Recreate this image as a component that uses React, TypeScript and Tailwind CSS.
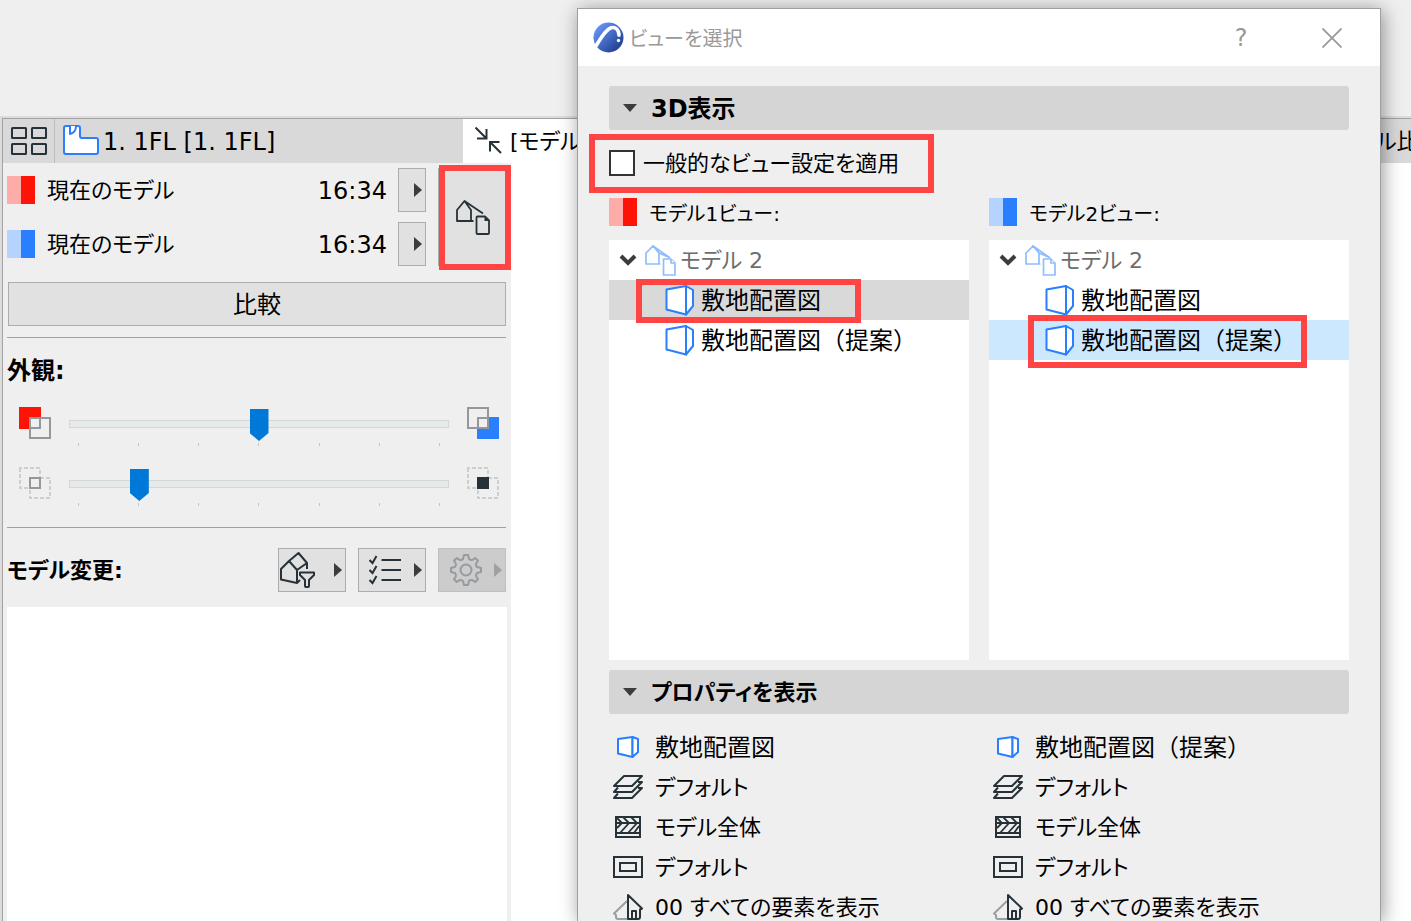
import { useState, type ReactNode } from "react"

type IconProps = { className?: string }

function GridIcon() {
  return (
    <svg width="36" height="28" viewBox="0 0 36 28" fill="none" stroke="#263238" strokeWidth="2" aria-hidden="true">
      <rect x="1" y="1" width="14" height="10" rx="0.500" />
      <rect x="21" y="1" width="14" height="10" rx="0.500" />
      <rect x="1" y="17" width="14" height="10" rx="0.500" />
      <rect x="21" y="17" width="14" height="10" rx="0.500" />
    </svg>
  )
}

function FloorPlanIcon() {
  return (
    <svg width="36" height="30" viewBox="0 0 36 30" fill="#fff" stroke="#2a7fff" strokeWidth="2" strokeLinejoin="round" className="-mt-0.5" aria-hidden="true">
      <path d="M3 1h12a2 2 0 0 1 2 2v8a2 2 0 0 0 2 2h14a2 2 0 0 1 2 2v12a2 2 0 0 1-2 2H3a2 2 0 0 1-2-2V3a2 2 0 0 1 2-2z" />
      <path d="M7 1v8c4-1 6-4 6-8" />
    </svg>
  )
}

function CollapseIcon() {
  return (
    <svg width="27" height="27" viewBox="0 0 27 27" fill="none" stroke="#263238" strokeWidth="2" className="-mt-0.5" aria-hidden="true">
      <path d="M0.500 0.500L11 11M11.500 2v9.500H2M26 26L15.500 15.500M15 24.500V15h9.500" />
    </svg>
  )
}

function ModelIcon({ className }: IconProps) {
  return (
    <svg width="34" height="35" viewBox="0 0 34 35" fill="none" stroke="currentColor" strokeWidth="1.800" strokeLinejoin="round" className={className} aria-hidden="true">
      <path d="M17.500 21H1V10l7.500-9L15 10v11M8.500 1L27 13.500" />
      <path d="M20.500 17.500q0-1 1-1H29l4 4V33q0 1-1 1H21.500q-1 0-1-1z" />
      <path d="M28.500 16.500l4.500 4.500h-4.500z" fill="currentColor" stroke="none" />
    </svg>
  )
}

function ModelTreeIcon() {
  return (
    <svg width="31" height="31" viewBox="0 0 31 31" fill="#fff" stroke="#8fbdff" strokeWidth="1.700" strokeLinejoin="round" aria-hidden="true">
      <path d="M8 1l16.500 11.500L14 8z" />
      <path d="M15.500 19H1V8l7-7 6 7v11" />
      <path d="M18.500 14H26l4 4v12H18.500z" />
      <path d="M26 14v4h4" />
    </svg>
  )
}

function ViewIcon() {
  return (
    <svg width="30" height="31" viewBox="0 0 30 31" fill="#fff" stroke="#2a7fff" strokeWidth="2" strokeLinejoin="round" aria-hidden="true">
      <path d="M1.500 4.500L21 1v28.500L1.500 24.500z" />
      <path d="M21 1l7 4v16L21 29.500z" />
    </svg>
  )
}

function SmallViewIcon() {
  return (
    <svg width="22" height="22" viewBox="0 0 22 22" fill="#fff" stroke="#2a7fff" strokeWidth="2" strokeLinejoin="round" aria-hidden="true">
      <path d="M1 3l14.500-2v20L1 17.500z" />
      <path d="M15.500 1L21 3v13l-5.500 5z" />
    </svg>
  )
}

function FilterHouseIcon() {
  return (
    <svg width="36" height="36" viewBox="0 0 36 36" fill="none" stroke="#263238" strokeWidth="2" strokeLinejoin="round" aria-hidden="true">
      <path d="M1 17l8-8 8 9v13L1 27.500zM9 9l9.500-8L27 11l-10 7M27 11v6M17 31l3-3" />
      <path d="M20 20.500h14v2.500l-5 5v6q0 1-1 1h-2q-1 0-1-1v-6l-5-5z" />
    </svg>
  )
}

function ChecklistIcon() {
  return (
    <svg width="33" height="30" viewBox="0 0 33 30" fill="none" stroke="#263238" strokeWidth="2" aria-hidden="true">
      <path d="M0.500 5l3 3L7.500 1M0.500 15l3 3 4-7M0.500 25l3 3 4-7M12.500 5H32M12.500 15H32M12.500 25H32" />
    </svg>
  )
}

function GearIcon() {
  return (
    <svg width="32" height="32" viewBox="0 0 32 32" fill="none" stroke="#959b9f" strokeWidth="2" strokeLinejoin="round" aria-hidden="true">
      <path d="M14 1h4l1 4q2 1.500 3.500 0.800L25.200 4 28 6.800l-1.800 2.700Q25.500 11.500 27 13l4 1v4l-4 1q-1.500 2-0.800 3.500L28 25.200 25.200 28l-2.700-1.800Q20.500 25.500 19 27l-1 4h-4l-1-4q-2-1.500-3.500-0.800L6.800 28 4 25.200l1.800-2.700Q6.500 20.500 5 19l-4-1v-4l4-1q1.500-2 0.800-3.500L4 6.800 6.800 4l2.700 1.800Q11.500 6.500 13 5z" />
      <circle cx="16" cy="16" r="5.500" />
    </svg>
  )
}

function OldOverlapIcon() {
  return (
    <svg width="32" height="32" viewBox="0 0 32 32" aria-hidden="true">
      <path d="M0 0h22v22H0z" fill="#fd1406" />
      <path d="M10 10h12v12H10z" fill="#efefef" />
      <path d="M11 11h20v20H11zM21 11v10H11" fill="none" stroke="#92989c" strokeWidth="2" />
    </svg>
  )
}

function NewOverlapIcon() {
  return (
    <svg width="32" height="32" viewBox="0 0 32 32" aria-hidden="true">
      <path d="M10 10h22v22H10z" fill="#2a7fff" />
      <path d="M10 10h12v12H10z" fill="#efefef" />
      <path d="M1 1h20v20H1zM11 21V11h10" fill="none" stroke="#92989c" strokeWidth="2" />
    </svg>
  )
}

function CommonIcon({ solid }: { solid?: boolean }) {
  return (
    <svg width="32" height="32" viewBox="0 0 32 32" fill="none" strokeWidth="2" aria-hidden="true">
      <path d="M1 1h20v20H1zM11 11h20v20H11z" stroke="#cccecf" strokeDasharray="4 2" strokeDashoffset="2" />
      {solid ? (
        <path d="M10 10h12v12H10z" fill="#263238" />
      ) : (
        <path d="M11 11h10v10H11z" fill="#efefef" stroke="#92989c" />
      )}
    </svg>
  )
}

function LayersIcon() {
  return (
    <svg width="30" height="24" viewBox="0 0 30 24" fill="none" stroke="#263238" strokeWidth="2" strokeLinejoin="round" aria-hidden="true">
      <path d="M1 11L11 1h18L19 11zM5 12.500L1 17h18L29 7h-4M5 18.500L1 23h18l10-10h-4" />
    </svg>
  )
}

function HatchIcon() {
  return (
    <svg width="26" height="22" viewBox="0 0 26 22" fill="none" stroke="#263238" strokeWidth="2" aria-hidden="true">
      <path d="M1 1h24v20H1zM1 17h24M1 7h24" />
      <path d="M2 2l5 5-5 5M8 1l6 6-9 10M16 1l6 6-9 10M24 10l-5 7" strokeWidth="1.800" />
    </svg>
  )
}

function FrameIcon() {
  return (
    <svg width="30" height="22" viewBox="0 0 30 22" fill="none" stroke="#263238" strokeWidth="2" aria-hidden="true">
      <path d="M1 1h28v20H1zM7 7h16v8H7z" />
    </svg>
  )
}

function RenovationIcon() {
  return (
    <svg width="30" height="26" viewBox="0 0 30 26" fill="none" strokeWidth="2" strokeLinejoin="round" aria-hidden="true">
      <path d="M14 7L1 19.500l2 1.500v2q0 2 2 2h9" stroke="#9a9fa2" />
      <path d="M15 25V1l14 13.500-2 1V23q0 2-2 2zM19 25v-8h4v8" stroke="#263238" />
    </svg>
  )
}

function Logo() {
  return (
    <svg width="32" height="32" viewBox="0 0 32 32" aria-hidden="true">
      <defs>
        <linearGradient id="ball" x1="0" y1="0" x2="1" y2="1">
          <stop offset="0.100" stopColor="#6a97fb" />
          <stop offset="0.900" stopColor="#1d3c8c" />
        </linearGradient>
      </defs>
      <circle cx="15.500" cy="15.500" r="15" fill="url(#ball)" />
      <path d="M1.500 26C6 20 11 8.500 18 5.800c4.500-1.200 8 2 8 7.500" fill="none" stroke="#fff" strokeWidth="3.600" strokeLinecap="round" />
      <circle cx="25.500" cy="18.500" r="1.700" fill="#fff" />
    </svg>
  )
}

function RightArrow({ className }: IconProps) {
  return (
    <svg width="8" height="14" viewBox="0 0 8 14" fill="currentColor" className={className} aria-hidden="true">
      <path d="M0 0l8 7-8 7z" />
    </svg>
  )
}

function Swatch({ color }: { color: "red" | "blue" }) {
  return (
    <span className="flex h-7 w-7 shrink-0">
      <span className={`flex-1 ${color === "red" ? "bg-[#fdaca8]" : "bg-[#b5d3ff]"}`} />
      <span className={`flex-1 ${color === "red" ? "bg-[#fd1406]" : "bg-[#2a7fff]"}`} />
    </span>
  )
}

function Highlight({ className }: { className: string }) {
  return <span className={`pointer-events-none absolute z-10 border-6 border-[#ff4444] ${className}`} />
}

const kana = "text-[22px] [font-feature-settings:'palt']"
const kanaSmall = "text-xl leading-none [font-feature-settings:'palt']"

function ModelRow({ color }: { color: "red" | "blue" }) {
  return (
    <div className="flex h-11 items-center">
      <Swatch color={color} />
      <span className={`ml-3 flex-1 pt-0.5 ${kana}`}>現在のモデル</span>
      <time className="mr-[11px] pt-0.5">16:34</time>
      <button aria-label="モデルを選択" className="flex h-11 w-7 items-center justify-end border border-[#adadad] bg-[#e1e1e1] pr-[3px] text-[#3c3c3c]">
        <RightArrow />
      </button>
    </div>
  )
}

function SliderRow({ label, initial, left, right }: { label: string; initial: number; left: ReactNode; right: ReactNode }) {
  const [value, setValue] = useState(initial)
  return (
    <div className="flex h-[60px] items-start gap-[18px] pl-3 pr-[7px]">
      {left}
      <div className="flex flex-1 flex-col pt-px">
        <input
          type="range"
          aria-label={label}
          min={0}
          max={6}
          value={value}
          onChange={(e) => setValue(Number(e.target.value))}
          className="h-8 w-full appearance-none bg-transparent [&::-webkit-slider-runnable-track]:h-2 [&::-webkit-slider-runnable-track]:border [&::-webkit-slider-runnable-track]:border-[#d6d6d6] [&::-webkit-slider-runnable-track]:bg-[#e7eaea] [&::-webkit-slider-thumb]:-mt-3 [&::-webkit-slider-thumb]:h-8 [&::-webkit-slider-thumb]:w-[19px] [&::-webkit-slider-thumb]:appearance-none [&::-webkit-slider-thumb]:bg-[#0078d7] [&::-webkit-slider-thumb]:[clip-path:polygon(0_0,100%_0,100%_75%,50%_100%,0_75%)]"
        />
        <div className="mt-[3px] flex justify-between px-[9px]">
          {[0, 1, 2, 3, 4, 5, 6].map((tick) => (
            <span key={tick} className="h-[3px] w-px bg-[#c4c4c4]" />
          ))}
        </div>
      </div>
      {right}
    </div>
  )
}

function ToolButton({ label, disabled, children }: { label: string; disabled?: boolean; children: ReactNode }) {
  return (
    <button
      aria-label={label}
      disabled={disabled}
      className="flex h-11 w-[68px] items-center justify-between border border-[#adadad] bg-[#e1e1e1] pr-[3px] text-[#3c3c3c] disabled:border-[#bfbfbf] disabled:bg-[#cccccc] disabled:text-[#a0a0a0]"
    >
      {children}
      <RightArrow />
    </button>
  )
}

function ComparePanel() {
  return (
    <aside className="flex w-[508px] shrink-0 flex-col bg-[#efefef] pl-1 pr-[5px] pt-[5px]">
      <div className="flex gap-3">
        <div className="flex flex-1 flex-col gap-[10px]">
          <ModelRow color="red" />
          <ModelRow color="blue" />
        </div>
        <div className="relative flex w-[68px]">
          <button aria-label="ビューを選択" className="flex flex-1 items-center justify-center border border-[#adadad] bg-[#e1e1e1] pl-0.5 text-[#263238]">
            <ModelIcon />
          </button>
          <Highlight className="-bottom-1 -right-[5px] -top-[3px] left-px" />
        </div>
      </div>
      <button className="ml-px mt-4 h-11 border border-[#adadad] bg-[#e1e1e1] pt-0.5">比較</button>
      <hr className="mt-[11px] border-[#a0a0a0]" />
      <h2 className="mb-6 mt-[21px] font-bold leading-6">外観:</h2>
      <SliderRow label="新旧モデル" initial={3} left={<OldOverlapIcon />} right={<NewOverlapIcon />} />
      <SliderRow label="共通要素" initial={1} left={<CommonIcon />} right={<CommonIcon solid />} />
      <hr className="border-[#a0a0a0]" />
      <div className="mt-5 flex items-center gap-3">
        <h2 className={`flex-1 pt-0.5 font-bold ${kana}`}>モデル変更:</h2>
        <ToolButton label="フィルター">
          <span className="pl-px"><FilterHouseIcon /></span>
        </ToolButton>
        <ToolButton label="変更リスト">
          <span className="pl-[10px]"><ChecklistIcon /></span>
        </ToolButton>
        <ToolButton label="設定" disabled>
          <span className="pl-[11px]"><GearIcon /></span>
        </ToolButton>
      </div>
      <div className="-mr-px mt-[15px] flex-1 bg-white" />
    </aside>
  )
}

function SectionHeader({ children, compact }: { children: ReactNode; compact?: boolean }) {
  return (
    <button className={`flex h-11 w-full items-center gap-[14px] rounded-[3px] bg-[#d5d5d5] px-[14px] font-bold ${compact ? kana : ""}`}>
      <svg width="14" height="8" viewBox="0 0 14 8" fill="#3c3c3c" aria-hidden="true">
        <path d="M0 0h14L7 8z" />
      </svg>
      <span className="pt-0.5">{children}</span>
    </button>
  )
}

const views = ["敷地配置図", "敷地配置図（提案）"]

function ViewTree({ number, color, selected, marked }: { number: number; color: "red" | "blue"; selected: number; marked: ReactNode }) {
  return (
    <div className="flex-1">
      <div className={`flex h-7 items-center gap-3 ${kanaSmall}`}>
        <Swatch color={color} />
        <span className="pt-1">モデル{number}ビュー:</span>
      </div>
      <ul className="mt-[14px] h-[420px] bg-white">
        <li className={`flex h-10 items-center gap-1 pl-[10px] text-[#6d6d6d] ${kana}`}>
          <svg width="18" height="12" viewBox="0 0 18 12" fill="none" stroke="#3c3c3c" strokeWidth="4" className="mr-1" aria-hidden="true">
            <path d="M2 2l7 7 7-7" />
          </svg>
          <ModelTreeIcon />
          <span className="pt-0.5">モデル 2</span>
        </li>
        {views.map((view, i) => (
          <li key={view} className={`relative flex h-10 items-center ${i !== selected ? "" : color === "red" ? "bg-[#d9d9d9]" : "bg-[#cce8ff]"}`}>
            <button className="flex flex-1 items-center gap-[6px] pl-14">
              <ViewIcon />
              <span className="pt-0.5">{view}</span>
            </button>
            {i === selected && marked}
          </li>
        ))}
      </ul>
    </div>
  )
}

function PropertyList({ view }: { view: string }) {
  const rows = [
    { icon: <SmallViewIcon />, text: view },
    { icon: <LayersIcon />, text: "デフォルト", compact: true },
    { icon: <HatchIcon />, text: "モデル全体", compact: true },
    { icon: <FrameIcon />, text: "デフォルト", compact: true },
    { icon: <RenovationIcon />, text: "00 すべての要素を表示", compact: true },
  ]
  return (
    <ul className="flex-1">
      {rows.map((row, i) => (
        <li key={i} className={`flex h-10 items-center gap-3 pl-1 ${row.compact ? kana : ""}`}>
          <span className="flex w-[30px] justify-center">{row.icon}</span>
          <span className="pt-0.5">{row.text}</span>
        </li>
      ))}
    </ul>
  )
}

function ViewDialog() {
  return (
    <section
      role="dialog"
      aria-label="ビューを選択"
      className="absolute bottom-0 left-[577px] right-[30px] top-2 z-20 border border-b-0 border-[#a0a0a0] bg-[#efefef] shadow-[2px_2px_18px_rgba(0,0,0,0.4)]"
    >
      <header className="flex h-[57px] items-center bg-white pl-[15px] text-[#999999]">
        <Logo />
        <h1 className={`ml-1 flex-1 pt-0.5 ${kanaSmall}`}>ビューを選択</h1>
        <button aria-label="ヘルプ" className="w-12">?</button>
        <button aria-label="閉じる" className="ml-[43px] mr-6 flex w-12 justify-center">
          <svg width="20" height="20" viewBox="0 0 20 20" stroke="currentColor" strokeWidth="1.800" aria-hidden="true">
            <path d="M0.500 0.500l19 19M19.500 0.500l-19 19" />
          </svg>
        </button>
      </header>
      <div className="px-[31px] pt-5">
        <SectionHeader>3D表示</SectionHeader>
        <div className="relative mt-5">
          <label className={`flex h-[26px] items-center gap-2 ${kana}`}>
            <input type="checkbox" className="h-[26px] w-[26px] appearance-none border-2 border-[#333333] bg-white checked:bg-[#333333]" />
            <span className="pt-0.5">一般的なビュー設定を適用</span>
          </label>
          <Highlight className="-bottom-[17px] -left-5 -top-4 w-[345px]" />
        </div>
        <div className="mt-[22px] flex gap-5">
          <ViewTree number={1} color="red" selected={0} marked={<Highlight className="-bottom-[3px] -top-px left-[27px] w-[225px]" />} />
          <ViewTree number={2} color="blue" selected={1} marked={<Highlight className="-bottom-2 -top-[5px] left-[39px] w-[279px]" />} />
        </div>
        <div className="mt-[10px]">
          <SectionHeader compact>プロパティを表示</SectionHeader>
        </div>
        <div className="mt-[13px] flex gap-5">
          {views.map((view) => (
            <PropertyList key={view} view={view} />
          ))}
        </div>
      </div>
    </section>
  )
}

export default function App() {
  return (
    <div className="relative flex h-screen flex-col overflow-hidden bg-[#efefef] pt-29 font-['DejaVu_Sans','Noto_Sans_CJK_JP',sans-serif] text-2xl leading-none text-black">
      <div className="flex flex-1 flex-col border-l-2 border-t-2 border-[#dcdcdc]">
        <div className="flex flex-1 flex-col border-l border-t border-[#a3a3a3]">
          <nav className="flex h-11 bg-[#d9d9d9]">
            <button aria-label="タブ一覧" className="flex w-[52px] items-center justify-center border-r border-[#bdbdbd]">
              <GridIcon />
            </button>
            <button className="flex w-[408px] items-center gap-1 pl-2">
              <FloorPlanIcon />
              <span className="pt-0.5">1. 1FL [1. 1FL]</span>
            </button>
            <button className={`flex flex-1 items-center gap-2 bg-white pl-3 ${kana}`}>
              <CollapseIcon />
              <span className="pt-0.5">[モデル</span>
            </button>
            <button className={`w-[35px] overflow-hidden whitespace-nowrap pt-0.5 text-left ${kana}`}>ル比</button>
          </nav>
          <div className="flex flex-1">
            <ComparePanel />
            <main className="flex-1 bg-white" />
          </div>
        </div>
      </div>
      <ViewDialog />
    </div>
  )
}
